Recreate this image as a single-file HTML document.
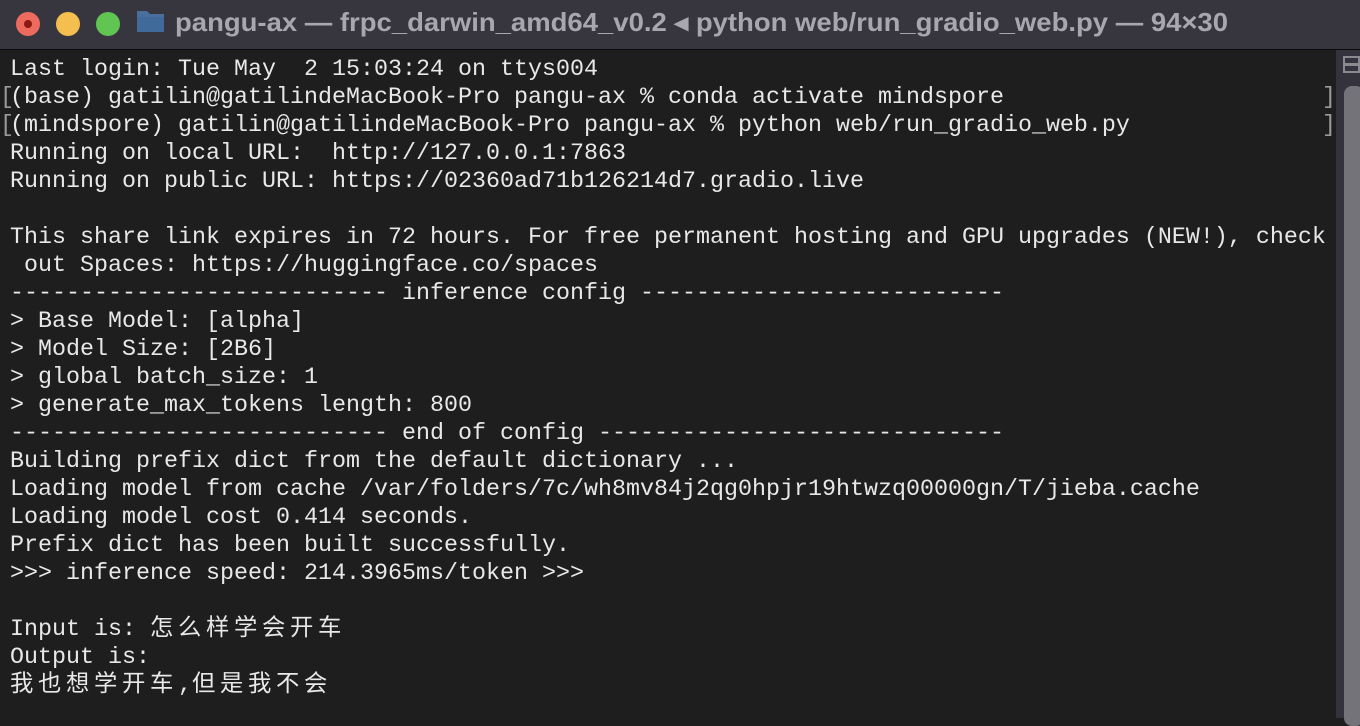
<!DOCTYPE html>
<html><head><meta charset="utf-8"><style>
html,body{margin:0;padding:0;width:1360px;height:718px;overflow:hidden;background:#1e1e1e}
#title{position:absolute;left:0;top:0;width:1360px;height:49px;background:#37363f;border-bottom:1px solid #0a0a0a}
.dot{position:absolute;top:12px;width:24px;height:24px;border-radius:50%}
#term{position:absolute;left:0;top:50px;width:1336px;height:668px;background:#1e1e1e}
pre{margin:0;position:absolute;left:10px;top:6px;font-family:"Liberation Mono","Noto Sans CJK SC",monospace;font-size:23.33px;line-height:28px;color:#e8e8e8}
.c{letter-spacing:4.67px}
.br{position:absolute;font-family:"Liberation Mono",monospace;font-size:23.33px;line-height:28px;color:#9a9a9a}
#sb{position:absolute;left:1336px;top:50px;width:24px;height:668px;background:#34333d}
#thumb{position:absolute;left:8px;top:36px;width:20px;height:640px;background:#747379;border-radius:8px}
</style></head><body>
<div id="title">
<div class="dot" style="left:16px;background:#ec6a5e"><div style="position:absolute;left:8px;top:8px;width:8px;height:8px;border-radius:50%;background:#8c1a10"></div></div>
<div class="dot" style="left:56px;background:#f4bf4f"></div>
<div class="dot" style="left:96px;background:#61c554"></div>
<svg style="position:absolute;left:136px;top:8px" width="30" height="26"><path d="M1 3 h10 l3 3 h14 v18 h-27z" fill="#4a6f9c"/><path d="M1 9 h27 v15 h-27z" fill="#3f6a99"/></svg>
<svg style="position:absolute;left:0;top:0" width="1336" height="49"><text x="175" y="31" textLength="1053" lengthAdjust="spacingAndGlyphs" font-family="Liberation Sans,sans-serif" font-weight="bold" font-size="26" fill="#a8a6af">pangu-ax — frpc_darwin_amd64_v0.2 ◂ python web/run_gradio_web.py — 94×30</text></svg>
</div>
<div id="term">
<div class="br" style="left:0;top:34px">[</div><div class="br" style="left:0;top:62px">[</div>
<div class="br" style="left:1322px;top:34px">]</div><div class="br" style="left:1322px;top:62px">]</div>
<pre>Last login: Tue May  2 15:03:24 on ttys004
(base) gatilin@gatilindeMacBook-Pro pangu-ax % conda activate mindspore
(mindspore) gatilin@gatilindeMacBook-Pro pangu-ax % python web/run_gradio_web.py
Running on local URL:  http://127.0.0.1:7863
Running on public URL: https://02360ad71b126214d7.gradio.live

This share link expires in 72 hours. For free permanent hosting and GPU upgrades (NEW!), check
 out Spaces: https://huggingface.co/spaces
--------------------------- inference config --------------------------
&gt; Base Model: [alpha]
&gt; Model Size: [2B6]
&gt; global batch_size: 1
&gt; generate_max_tokens length: 800
--------------------------- end of config -----------------------------
Building prefix dict from the default dictionary ...
Loading model from cache /var/folders/7c/wh8mv84j2qg0hpjr19htwzq00000gn/T/jieba.cache
Loading model cost 0.414 seconds.
Prefix dict has been built successfully.
&gt;&gt;&gt; inference speed: 214.3965ms/token &gt;&gt;&gt;

Input is: <span class="c">怎么样学会开车</span>
Output is:
<span class="c">我也想学开车</span>,<span class="c">但是我不会</span></pre>
</div>
<div id="sb">
<div style="position:absolute;left:7px;top:6px;width:17px;height:17px;border:2px solid #8a8990;box-sizing:border-box"><div style="position:absolute;left:0;top:5px;width:13px;height:3px;background:#8a8990"></div></div>
<div id="thumb"></div>
</div>
</body></html>
